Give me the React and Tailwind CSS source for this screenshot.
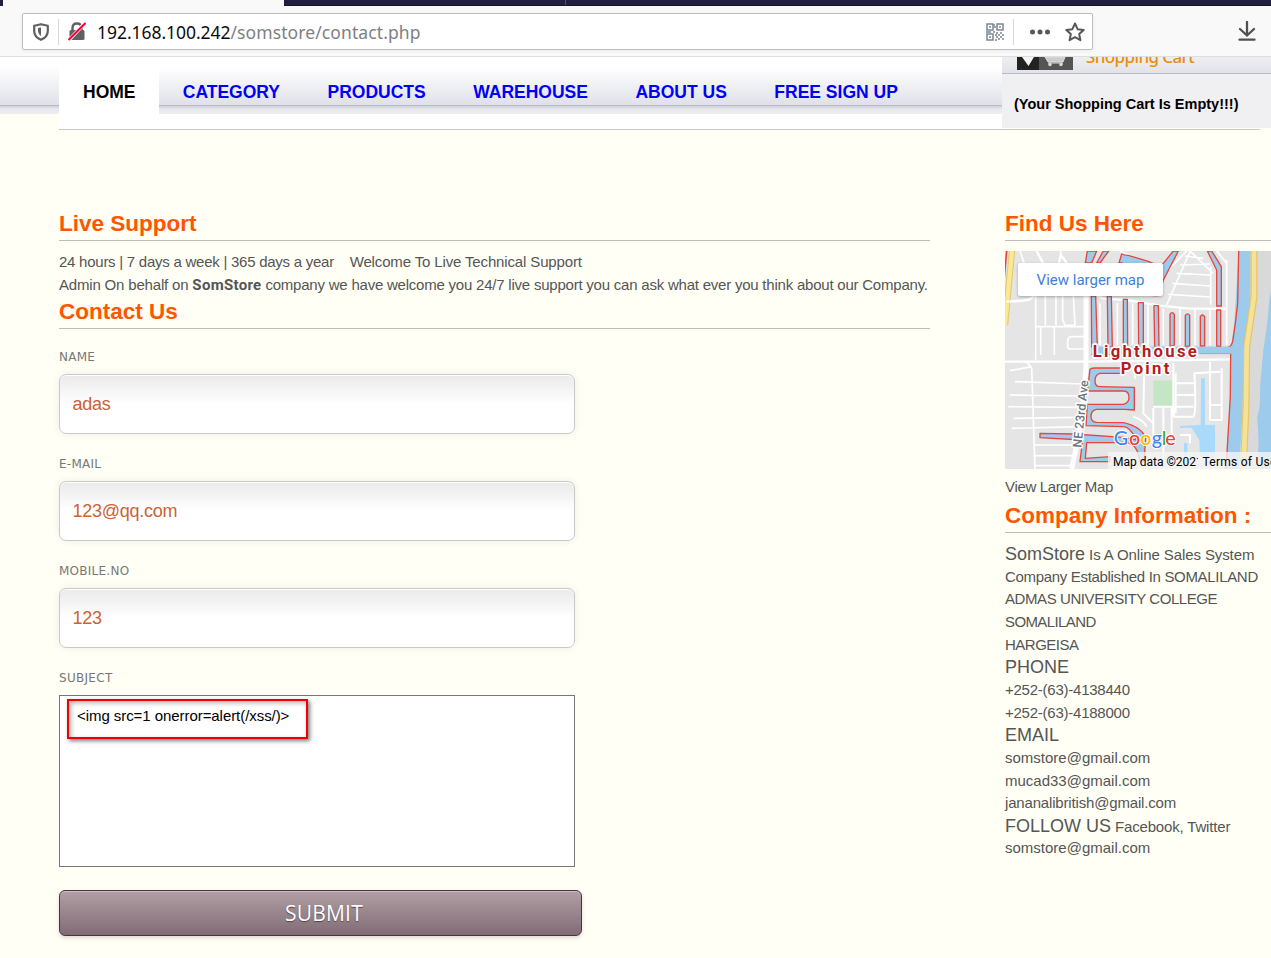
import React from 'react';

const Road = (p) => <path fill="none" stroke="#fff" strokeWidth="7" strokeLinejoin="round" {...p} />;
const Water = (p) => <path fill="#9ccbec" stroke="#e8453c" strokeWidth="4" strokeLinejoin="round" {...p} />;

function MapArt() {
  return (
    <svg className="absolute inset-0" width="266" height="218" viewBox="15 33 798 654">
      <rect x="0" y="0" width="830" height="700" fill="#e5e5e5" />
      <rect x="735" y="33" width="90" height="654" fill="#d9d9d9" />
      <path d="M716 33H752L750 190L732 320L728 500L718 687H678L690 470V345L703 250Z" fill="#9ccbec" />
      <path d="M813 150L807 185L802 250L790 330L781 430L779 500L772 530L776 610L770 687H813Z" fill="#9ccbec" />
      <path d="M762 33L762 170L740 320L738 500L730 687" fill="none" stroke="#e3c56d" strokeWidth="21" />
      <path d="M762 33L762 170L740 320L738 500L730 687" fill="none" stroke="#f6e296" strokeWidth="14" />
      <path d="M20 33L13 110" stroke="#e8453c" strokeWidth="5" fill="none" />
      <path d="M36 33L15 255" stroke="#e3c56d" strokeWidth="19" fill="none" />
      <path d="M36 33L15 255" stroke="#fbe795" strokeWidth="13" fill="none" />
      <rect x="460" y="421" width="62" height="80" fill="#c5e6c4" />
      <Road d="M20 185L55 183Q100 182 106 160L122 110L165 130M165 130L182 45L205 75L265 100M110 33L150 110L310 175L380 180L480 197L560 205L680 207" />
      <Road strokeWidth="5" d="M107 165V360M136 165V256M168 165V256M188 165V240L195 256H225L220 165M107 260H255M122 262V345M163 262V345M255 290H215Q203 290 203 305V320Q203 327 215 327H255M182 33V50M60 33L108 175M360 33L500 95L560 33" />
      <Road d="M258 160V380L250 480L238 580L215 687" strokeWidth="15" />
      <Road d="M15 365H258L690 358" />
      <Road strokeWidth="5" d="M80 365L95 385L105 687M30 392L95 380M45 425L250 432M28 465L245 468M25 500L245 502M40 535L235 532M35 565L240 560M100 615H235M100 647H225M105 677H220" />
      <Road strokeWidth="5" d="M300 190V315M352 190V315M398 190V315M444 190V315M490 205V315M540 205V315M585 205V315M630 205V315M680 60V315" />
      <Road strokeWidth="5" d="M505 163L630 171M517 130L630 138M530 100L633 105M540 75L630 72M555 48L610 55M632 80V195M570 33L640 100M650 33L680 70M500 195L570 35" />
      <Road strokeWidth="6" d="M520 370V500L522 530H580Q590 520 583 400L660 395M527 398V520M527 430H583M527 465H583M460 500H580M630 365V540H665V385M630 495H665M490 505V660M515 505V580M540 585H570V610M460 505V585M433 370L430 520L460 550M385 375Q410 390 405 415M400 530Q430 540 440 560" />
      <path d="M274 320H706V343H274Z" fill="#9ccbec" />
      <path d="M716 33L713 190L706 250L698 305Q692 323 680 323L655 323M274 343H330M600 340H692L691 470L678 687" fill="none" stroke="#e8453c" strokeWidth="4" />
      <Water d="M262 33H290L275 69H256ZM310 33L290 69H300L326 33Z" />
      <Water d="M365 42Q372 46 385 46L445 64Q480 80 490 70L520 33H535L490 120L475 167H461L485 95Q420 90 365 69L357 69Z" />
      <Water d="M274 168H287L292 321H275ZM322 168H334L337 321H324ZM370 178H382L383 321H370ZM415 188H430V321H416ZM462 197H475L477 321H464Z" />
      <Water d="M510 320V223Q516 213 523 223V315ZM556 320V226Q562 217 569 226V318ZM601 318V230Q607 220 614 230V318ZM650 318V210H662V320ZM622 33L650 90V198H664V80L635 33Z" />
      <path d="M276 320H704V341H276Z" fill="#9ccbec" />
      <Water d="M270 388Q275 384 285 384H375V400H300Q285 404 285 422Q285 440 300 440H355Q387 442 387 472Q387 493 370 493H290Q273 495 273 530Q273 545 290 547L370 548Q425 560 437 595L432 665H420Q412 610 380 608H260L256 655L330 650V667H240L248 600L120 593V580L220 582L370 592L410 600Q390 565 370 563L258 558L262 493H310V508H403V442H265Z" fillRule="evenodd" stroke="none" fill="none" />
      <Water d="M270 388Q275 384 285 384H375V400H300Q285 404 285 422Q285 440 300 440L403 442V510L375 508H290Q273 510 273 530Q273 545 290 547L370 548Q425 560 437 595L432 665H420Q412 610 380 608H260L256 655L330 650V665H240L248 600L120 593V580L220 582L370 592L410 600Q390 560 370 560L258 557L262 493H370Q387 490 387 472Q387 453 370 453H262Z" />
      <path d="M603 415H615V555H645V650H600L598 600L575 563H540V558L602 555ZM552 610H562V680H552Z" fill="#a9d9fb" />
      <g fontFamily="Roboto, sans-serif" fontWeight="700" fontSize="50" letterSpacing="3.8" fill="#b71c1c" stroke="#fff" strokeWidth="10" paintOrder="stroke" strokeLinejoin="round">
        <text x="278" y="350" textLength="316">Lighthouse</text>
        <text x="362" y="403" textLength="150">Point</text>
      </g>
      <text transform="translate(244 624) rotate(-84)" fontFamily="Roboto, sans-serif" fontWeight="500" fontSize="37" textLength="203" fill="#6b747b" stroke="#fff" strokeWidth="8" paintOrder="stroke">NE 23rd Ave</text>
      <g fontFamily="Lato, sans-serif" fontSize="59" fontWeight="500" stroke="#fff" strokeWidth="6" paintOrder="stroke">
        <text x="341" y="614" fill="#4285f4">G</text><text x="387" y="614" fill="#ea4335">o</text><text x="421" y="614" fill="#fbbc05">o</text><text x="455" y="614" fill="#4285f4">g</text><text x="485" y="614" fill="#34a853">l</text><text x="496" y="614" fill="#ea4335">e</text>
      </g>
    </svg>
  );
}

function Heading({ children }) {
  return <h2 className="h-[34px] border-b border-[#bdbdb9] text-[22.5px] leading-[33px] font-bold whitespace-nowrap text-[#ff5500]">{children}</h2>;
}

function Field({ label, value }) {
  return (
    <label className="block h-[107px]">
      <span className="block h-[28px] font-['DejaVu_Sans',sans-serif] text-[12px] leading-[22px] tracking-[0.25px] text-[#777]">{label}</span>
      <span className="flex h-[60px] w-[516px] items-center rounded-[7px] border border-[#c9c9cc] bg-linear-to-b from-[#eaeaea] to-white to-50% px-[12.500px] text-[18px] tracking-[-0.25px] text-[#cc6235] shadow-[inset_0_1px_0_#fff,0_0_9px_rgba(0,0,0,0.07)]">{value}</span>
    </label>
  );
}

const nav = ['HOME', 'CATEGORY', 'PRODUCTS', 'WAREHOUSE', 'ABOUT US', 'FREE SIGN UP'];

function Qr() {
  return (
    <svg className="shrink-0" width="18" height="18" viewBox="0 0 18 18" fill="none" stroke="#7b8791" strokeWidth="1.5">
      <path d="M1 1h6v6h-6zM11 1h6v6h-6zM1 11h6v6h-6z" />
      <path d="M3 4h2M13 4h2M3 14h2M8 4h2M8 1v2M7 9h2M0 9h5M10 10h2M14 10h2M12 12h2M16 12h2M10 14h2M14 14h2M12 16h2M16 16h2M9 17h2M9 12h2" />
    </svg>
  );
}

function Browser() {
  return (
    <header className="h-[57px] border-b border-[#dededf] bg-[#f9f9fa]">
      <div className="flex h-[6px] justify-between">
        <div className="w-[3px] bg-[#1f2140]" />
        <div className="flex w-[987px] border-b border-[#15162c] bg-[#1f2140]"><div className="ml-[281px] w-px bg-[#55566c]" /></div>
      </div>
      <div className="flex pt-[7px] pl-[22px]">
        <div className="flex h-[37px] w-[1071px] shrink-0 items-center rounded-[2px] border border-[#bdbdbf] bg-white pl-[10px] shadow-[0_1px_4px_rgba(0,0,0,0.06)]">
          <svg className="shrink-0" width="16" height="18" viewBox="0 0 16 18" fill="none" stroke="#606064" strokeWidth="2.200"><path d="M8 1.200L14.800 2.800V8Q14.800 14 8 16.800Q1.200 14 1.200 8V2.800Z" strokeLinejoin="round" /><path d="M8 4.500V13Q5 11 5 8V5Z" fill="#606064" stroke="none" /></svg>
          <div className="ml-[9px] h-[26px] w-px shrink-0 bg-[#d7d7db]" />
          <svg className="ml-[9px] shrink-0" width="18" height="19" viewBox="0 0 18 19"><path d="M4.500 9V6Q4.500 1.500 9 1.500T13.500 6V9" fill="none" stroke="#606064" strokeWidth="2.400" /><rect x="1.500" y="8" width="15" height="10" rx="1.500" fill="#606064" /><path d="M1 18L17 1" stroke="#fff" strokeWidth="3.500" /><path d="M.500 18L17.500 1" stroke="#ff0039" strokeWidth="2.200" /></svg>
          <div className="ml-[11px] w-[889px] shrink-0 font-['Noto_Sans',sans-serif] text-[17.5px] leading-[26px] text-[#808083]"><span className="tracking-[-0.05px] text-[#0c0c0d]">192.168.100.242</span><span className="tracking-[0.1px]">/somstore/contact.php</span></div>
          <Qr />
          <div className="ml-[9px] h-[26px] w-px shrink-0 bg-[#d7d7db]" />
          <svg className="ml-[16px] shrink-0" width="20" height="6" fill="#58585c"><circle cx="2.500" cy="3" r="2.500" /><circle cx="10" cy="3" r="2.500" /><circle cx="17.500" cy="3" r="2.500" /></svg>
          <svg className="ml-[15px] shrink-0" width="20" height="20" viewBox="0 0 20 20" fill="none" stroke="#58585c" strokeWidth="2" strokeLinejoin="round"><path d="M10 1.500L12.600 7.200L18.700 7.900L14.200 12.100L15.400 18.200L10 15.200L4.600 18.200L5.800 12.100L1.300 7.900L7.400 7.200Z" /></svg>
        </div>
        <svg className="mt-[8px] ml-[145px] shrink-0" width="18" height="20" fill="none" stroke="#505054" strokeWidth="2.300" strokeLinecap="round"><path d="M9 1V14M2 8L9 14.500L16 8M1.500 18.700H16.500" /></svg>
      </div>
    </header>
  );
}

const info = [
  [null, 'Company Established In SOMALILAND', 'tracking-[-0.32px]'],
  [null, 'ADMAS UNIVERSITY COLLEGE', 'tracking-[-0.42px]'],
  [null, 'SOMALILAND', 'tracking-[-0.6px]'],
  [null, 'HARGEISA', 'tracking-[-0.5px]'],
  ['PHONE', '', ''],
  [null, '+252-(63)-4138440', 'tracking-[-0.24px]'],
  [null, '+252-(63)-4188000', 'tracking-[-0.24px]'],
  ['EMAIL', '', ''],
  [null, 'somstore@gmail.com', ''],
  [null, 'mucad33@gmail.com', ''],
  [null, 'jananalibritish@gmail.com', 'tracking-[-0.17px]'],
  ['FOLLOW US', ' Facebook, Twitter', 'tracking-[-0.17px]'],
  [null, 'somstore@gmail.com', ''],
];

export default function App() {
  return (
    <div className="h-[958px] w-[1271px] overflow-hidden bg-[#fffff5] font-['Liberation_Sans',Arial,sans-serif] text-[15px] text-[#555]">
      <Browser />
      <div className="flex h-[73px]">
        <div className="flex h-[57px] w-[59px] flex-col">
          <div className="h-[48px] bg-linear-to-b from-white from-20% to-[#e0e1e8]" />
          <div className="h-[1px] bg-[#b9bac5]" />
          <div className="flex-1 bg-linear-to-b from-[#cfd0d8] via-[#e6e6ec] via-30% to-[#f0f0f3]" />
        </div>
        <div className="w-[943px] border-b border-[#c8c8cc] bg-white">
          <nav className="flex h-[57px] bg-[linear-gradient(#fff_10px,#e0e1e8_48px,#b9bac5_48px,#b9bac5_49px,#cfd0d8_49px,#e6e6ec_52px,#f0f0f3_57px)]">
            {nav.map((n, i) => (
              <a key={n} className={i === 0 ? 'w-[100px] bg-white pt-[21px] pl-6 text-[17.5px] leading-[28px] font-bold text-black' : 'px-[23.750px] pt-[21px] text-[17.5px] leading-[28px] font-bold text-[#0000f5]'}>{n}</a>
            ))}
          </nav>
        </div>
        <div className="w-[258px] border-b border-[#c8c8cc]">
          <div className="h-[71px] w-[269px] bg-[#f0f0f3]">
            <div className="flex h-[17px] overflow-hidden border-b border-[#b9bac5] bg-linear-to-b from-[#eeeef2] to-[#e2e3e9] pl-[15px]">
              <svg width="56" height="13" viewBox="0 0 56 13"><rect width="22" height="13" fill="#222" /><rect x="22" width="34" height="13" fill="#555" /><path d="M5 0H17L11.500 9Z" fill="#f4f4f4" /><path d="M28 0H48L46 5H31ZM31 6H46" fill="#ccc" stroke="#ddd" /><circle cx="33" cy="7.500" r="1.700" fill="#ddd" /><circle cx="44" cy="7.500" r="1.700" fill="#ddd" /></svg>
              <span className="-mt-[13px] ml-[13px] font-['Noto_Sans',sans-serif] text-[17px] leading-[26px] font-medium tracking-[-0.6px] text-[#e88e0c]">Shopping Cart</span>
            </div>
            <p className="pt-[19px] pl-[12px] text-[14.5px] leading-[22px] font-bold whitespace-nowrap text-black">(Your Shopping Cart Is Empty!!!)</p>
          </div>
        </div>
      </div>

      <main className="flex gap-[75px] pt-[77px] pl-[59px]">
        <section className="w-[871px] shrink-0">
          <Heading>Live Support</Heading>
          <div className="h-[54px] pt-[9px] leading-[23px] whitespace-nowrap">
            <p className="whitespace-pre"><span className="tracking-[-0.25px]">24 hours | 7 days a week | 365 days a year    </span><span className="tracking-[-0.14px]">Welcome To Live Technical Support</span></p>
            <p className="tracking-[-0.22px]"><span className="tracking-[-0.18px]">Admin On behalf on </span><b className="font-['Roboto',sans-serif] tracking-[0.3px]">SomStore</b> company we have welcome you 24/7 live support you can ask what ever you think about our Company.</p>
          </div>
          <Heading>Contact Us</Heading>
          <form className="pt-[17px]">
            <Field label="NAME" value="adas" />
            <Field label="E-MAIL" value="123@qq.com" />
            <Field label="MOBILE.NO" value="123" />
            <div className="h-[28px] font-['DejaVu_Sans',sans-serif] text-[12px] leading-[22px] tracking-[0.3px] text-[#777]">SUBJECT</div>
            <div className="h-[172px] w-[516px] border border-[#777] bg-white pt-[3px] pl-[7px]">
              <div className="h-[40px] w-[241px] border-2 border-[#f00000] pl-[8px] text-[15px] leading-[30px] tracking-[-0.06px] whitespace-nowrap text-black shadow-[2px_2px_4px_rgba(0,0,0,0.5),inset_2px_2px_5px_rgba(0,0,0,0.3)]">{'<img src=1 onerror=alert(/xss/)>'}</div>
            </div>
            <div className="mt-[23px] flex h-[46px] w-[523px] items-center justify-center rounded-[6px] border border-[#4f3048] bg-linear-to-b from-[#b1a0a5] to-[#816c75] pt-px pl-[7px] font-['Open_Sans',sans-serif] text-[21px] tracking-[0.2px] text-white shadow-[inset_0_1px_0_#c9bcc2,0_2px_4px_rgba(0,0,0,0.15)] [text-shadow:0_1px_1px_#54444e]">SUBMIT</div>
          </form>
        </section>
        <aside className="w-[266px] shrink-0 whitespace-nowrap">
          <Heading>Find Us Here</Heading>
          <div className="relative mt-[10px] h-[218px] overflow-hidden">
            <MapArt />
            <div className="absolute top-[12px] left-[13px] flex h-[33px] w-[145px] items-center justify-center rounded-[2px] bg-white pt-px font-['Roboto',sans-serif] text-[15px] text-[#3f7edc] shadow-[0_1px_3px_rgba(0,0,0,0.3)]">View larger map</div>
            <div className="absolute right-0 bottom-0 flex h-[17px] w-[163px] bg-[#f5f5f5cc] pl-[5px] font-['Roboto',sans-serif] text-[12px] leading-[20px] text-black"><span className="w-[84.500px] shrink-0 overflow-hidden">Map data ©2021</span><span className="pl-[5px] tracking-[0.25px]">Terms of Use</span></div>
          </div>
          <p className="h-[30px] pt-[7px] leading-[22px] tracking-[-0.34px]">View Larger Map</p>
          <Heading>Company Information :</Heading>
          <div className="pt-[10.100px] leading-[22.650px]">
            <p className="h-[22.650px]"><span className="text-[18px]">SomStore</span><span className="tracking-[-0.1px]"> Is A Online Sales System</span></p>
            {info.map(([big, text, spacing], i) => (
              <p key={i} className="h-[22.650px]">{big && <span className="text-[18px]">{big}</span>}<span className={spacing}>{text}</span></p>
            ))}
          </div>
        </aside>
      </main>
    </div>
  );
}
